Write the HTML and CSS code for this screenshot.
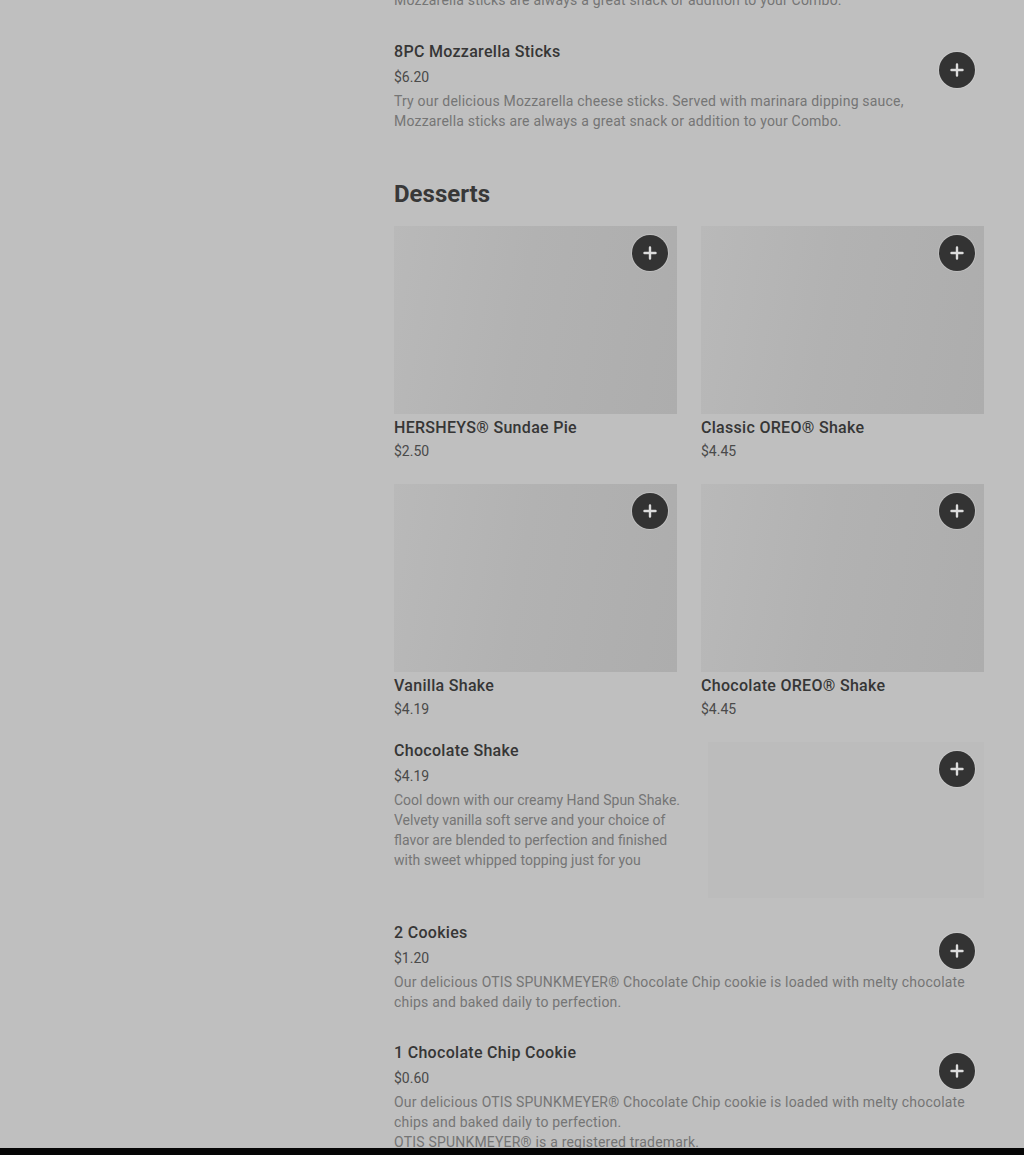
FILE: index.html
```html
<!DOCTYPE html>
<html lang="en">
<head>
    <meta charset="UTF-8">
    <meta name="viewport" content="width=device-width, initial-scale=1.0">
    <title>Menu - Desserts</title>
    <link rel="stylesheet" href="styles.css">
</head>
<body>
    <div class="page">
        <aside class="sidebar"></aside>

        <main class="menu">
            <div class="item tail">
                <p class="item-desc">Mozzarella sticks are always a great snack or addition to your Combo.</p>
            </div>

            <div class="item">
                <h3 class="item-title">8PC Mozzarella Sticks</h3>
                <div class="item-price">$6.20</div>
                <p class="item-desc">Try our delicious Mozzarella cheese sticks. Served with marinara dipping sauce, Mozzarella sticks are always a great snack or addition to your Combo.</p>
                <button class="add-btn" aria-label="Add">
                    <svg width="14" height="14" viewBox="0 0 14 14"><path d="M7 1.5v11M1.5 7h11" stroke="#dcdcdc" stroke-width="2.4" stroke-linecap="round"/></svg>
                </button>
            </div>

            <h2 class="section-title">Desserts</h2>

            <div class="card-grid">
                <div class="card">
                    <div class="card-img">
                        <button class="add-btn" aria-label="Add">
                            <svg width="14" height="14" viewBox="0 0 14 14"><path d="M7 1.5v11M1.5 7h11" stroke="#dcdcdc" stroke-width="2.4" stroke-linecap="round"/></svg>
                        </button>
                    </div>
                    <h3 class="item-title card-title">HERSHEYS® Sundae Pie</h3>
                    <div class="card-price">$2.50</div>
                </div>
                <div class="card">
                    <div class="card-img">
                        <button class="add-btn" aria-label="Add">
                            <svg width="14" height="14" viewBox="0 0 14 14"><path d="M7 1.5v11M1.5 7h11" stroke="#dcdcdc" stroke-width="2.4" stroke-linecap="round"/></svg>
                        </button>
                    </div>
                    <h3 class="item-title card-title">Classic OREO® Shake</h3>
                    <div class="card-price">$4.45</div>
                </div>
                <div class="card">
                    <div class="card-img">
                        <button class="add-btn" aria-label="Add">
                            <svg width="14" height="14" viewBox="0 0 14 14"><path d="M7 1.5v11M1.5 7h11" stroke="#dcdcdc" stroke-width="2.4" stroke-linecap="round"/></svg>
                        </button>
                    </div>
                    <h3 class="item-title card-title">Vanilla Shake</h3>
                    <div class="card-price">$4.19</div>
                </div>
                <div class="card">
                    <div class="card-img">
                        <button class="add-btn" aria-label="Add">
                            <svg width="14" height="14" viewBox="0 0 14 14"><path d="M7 1.5v11M1.5 7h11" stroke="#dcdcdc" stroke-width="2.4" stroke-linecap="round"/></svg>
                        </button>
                    </div>
                    <h3 class="item-title card-title">Chocolate OREO® Shake</h3>
                    <div class="card-price">$4.45</div>
                </div>

                <div class="wide-card">
                    <div class="wide-text">
                        <h3 class="item-title">Chocolate Shake</h3>
                        <div class="item-price">$4.19</div>
                        <p class="item-desc">Cool down with our creamy Hand Spun Shake. Velvety vanilla soft serve and your choice of flavor are blended to perfection and finished with sweet whipped topping just for you</p>
                    </div>
                    <div class="wide-img">
                        <button class="add-btn" aria-label="Add">
                            <svg width="14" height="14" viewBox="0 0 14 14"><path d="M7 1.5v11M1.5 7h11" stroke="#dcdcdc" stroke-width="2.4" stroke-linecap="round"/></svg>
                        </button>
                    </div>
                </div>
            </div>

            <div class="item after-grid">
                <h3 class="item-title">2 Cookies</h3>
                <div class="item-price">$1.20</div>
                <p class="item-desc">Our delicious OTIS SPUNKMEYER® Chocolate Chip cookie is loaded with melty chocolate chips and baked daily to perfection.</p>
                <button class="add-btn" aria-label="Add">
                    <svg width="14" height="14" viewBox="0 0 14 14"><path d="M7 1.5v11M1.5 7h11" stroke="#dcdcdc" stroke-width="2.4" stroke-linecap="round"/></svg>
                </button>
            </div>

            <div class="item">
                <h3 class="item-title">1 Chocolate Chip Cookie</h3>
                <div class="item-price">$0.60</div>
                <p class="item-desc">Our delicious OTIS SPUNKMEYER® Chocolate Chip cookie is loaded with melty chocolate chips and baked daily to perfection.<br>OTIS SPUNKMEYER® is a registered trademark.</p>
                <button class="add-btn" aria-label="Add">
                    <svg width="14" height="14" viewBox="0 0 14 14"><path d="M7 1.5v11M1.5 7h11" stroke="#dcdcdc" stroke-width="2.4" stroke-linecap="round"/></svg>
                </button>
            </div>
        </main>
    </div>

    <div class="bottom-sheet"></div>
</body>
</html>
```

FILE: styles.css
```css
body {
    margin: 0;
    padding: 0;
    font-family: Roboto, 'Liberation Sans', Arial, sans-serif;
    background: #bfbfbf;
    color: #333;
    overflow: hidden;
}

.page {
    display: flex;
    gap: 24px;
}

.sidebar {
    width: 370px;
    flex-shrink: 0;
}

.menu {
    width: 590px;
    display: flex;
    flex-direction: column;
}

/* list rows */
.item {
    position: relative;
    margin-top: 30px;
}

.item.tail {
    margin-top: -10px;
}

.item.after-grid {
    margin-top: 23px;
}

.after-grid + .item {
    margin-top: 29px;
}

.item-title {
    margin: 0;
    font-size: 16px;
    line-height: 24px;
    font-weight: 500;
    letter-spacing: 0.3px;
    color: #363636;
}

.item-price {
    margin-top: 3px;
    font-size: 14px;
    line-height: 20px;
    color: #4a4a4a;
}

.item-desc {
    margin: 4px 0 0;
    max-width: 572px;
    font-size: 14px;
    line-height: 20px;
    letter-spacing: 0.2px;
    color: #757575;
}

.tail .item-desc {
    margin: 0;
}

.add-btn {
    position: absolute;
    top: 12px;
    right: 9px;
    width: 36px;
    height: 36px;
    padding: 0;
    border: none;
    border-radius: 50%;
    background: #333;
    display: flex;
    align-items: center;
    justify-content: center;
    box-shadow: 0 0 0 1px rgba(220, 220, 220, 0.35);
    cursor: pointer;
}

.section-title {
    margin: 47px 0 0;
    font-size: 24px;
    line-height: 32px;
    font-weight: 700;
    color: #383838;
}

/* image cards */
.card-grid {
    margin-top: 16px;
    display: grid;
    grid-template-columns: 1fr 1fr;
    gap: 23px 24px;
}

.card-img {
    position: relative;
    height: 188px;
    background: linear-gradient(100deg, #b9b9b9 0%, #b2b2b2 45%, #adadad 100%);
}

.card-img .add-btn {
    top: 9px;
}

.card-title {
    margin-top: 2px;
}

.card-price {
    margin-top: 1px;
    font-size: 14px;
    line-height: 20px;
    color: #4a4a4a;
}

.wide-card {
    grid-column: 1 / -1;
    display: flex;
    gap: 24px;
    align-items: flex-start;
}

.wide-text {
    flex: 1;
    margin-top: -3px;
}

.wide-text .item-desc {
    max-width: none;
    letter-spacing: 0;
}

.wide-img {
    position: relative;
    width: 276px;
    height: 156px;
    flex-shrink: 0;
    background: #bcbcbc;
}

.wide-img .add-btn {
    top: 9px;
}

.bottom-sheet {
    position: fixed;
    left: 0;
    right: 0;
    bottom: 0;
    height: 7px;
    background: #050505;
}
```
